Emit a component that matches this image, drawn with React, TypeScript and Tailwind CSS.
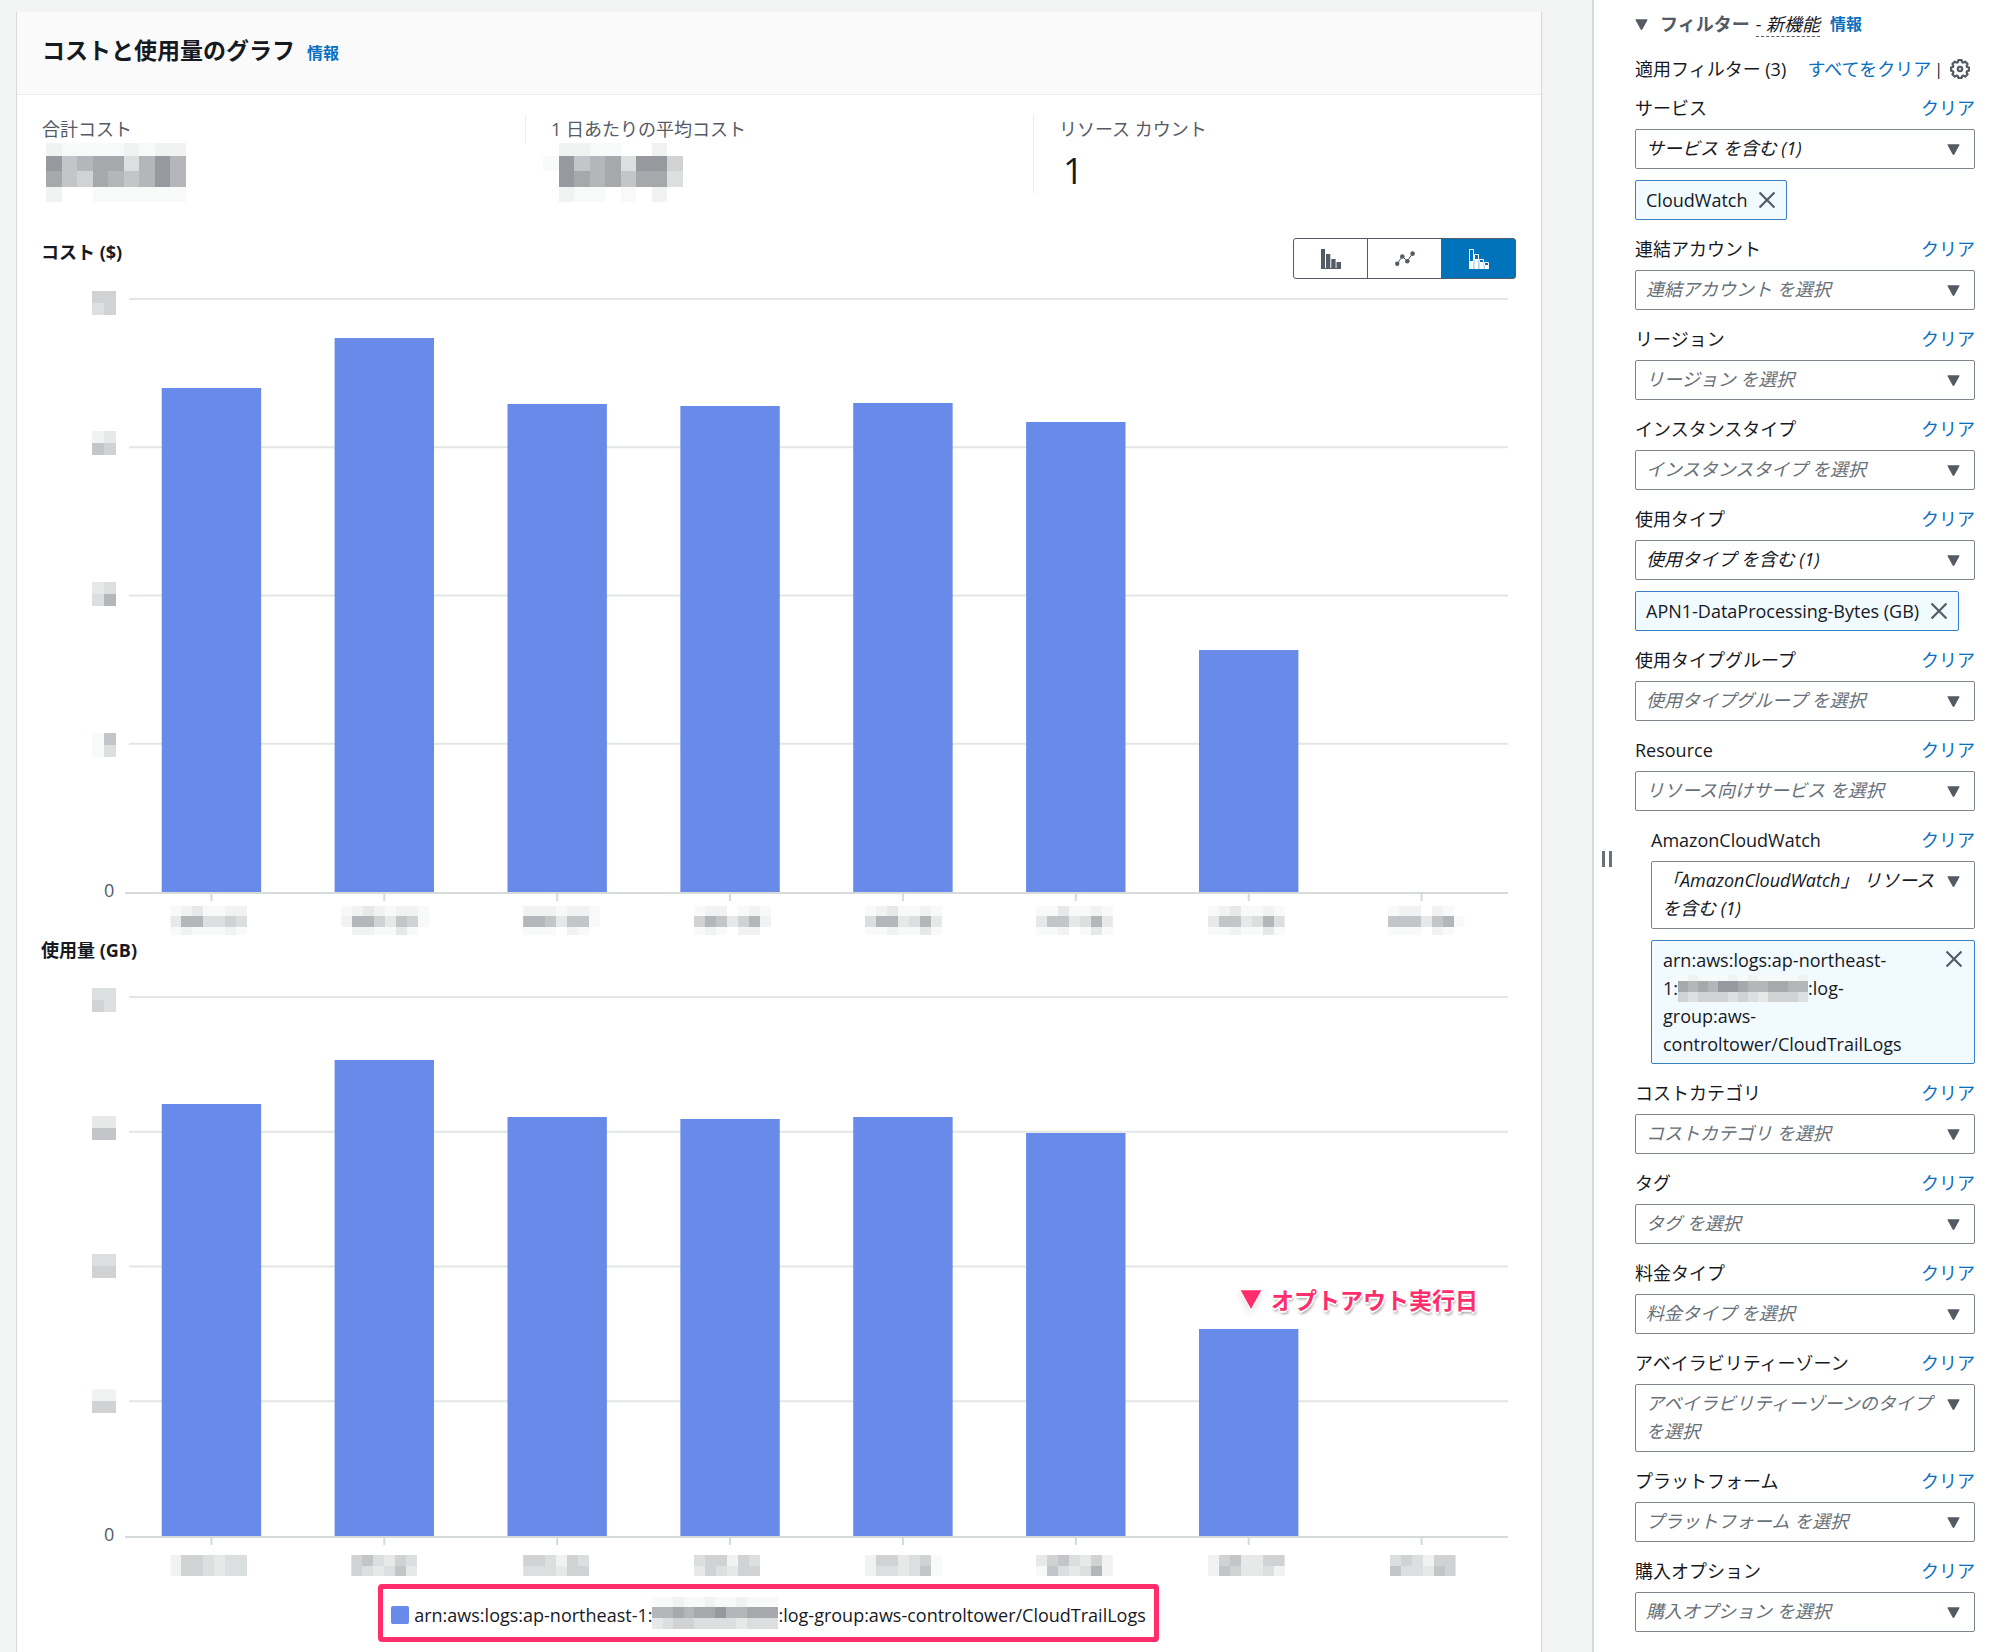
import { useId, useState } from "react"
import clsx from "clsx"

type FilterItem = {
  label: string
  text: string
  token?: string
  selected?: boolean
  tall?: boolean
  nested?: boolean
}

const filters: FilterItem[] = [
  { label: "サービス", text: "サービス を含む (1)", selected: true, token: "CloudWatch" },
  { label: "連結アカウント", text: "連結アカウント を選択" },
  { label: "リージョン", text: "リージョン を選択" },
  { label: "インスタンスタイプ", text: "インスタンスタイプ を選択" },
  { label: "使用タイプ", text: "使用タイプ を含む (1)", selected: true, token: "APN1-DataProcessing-Bytes (GB)" },
  { label: "使用タイプグループ", text: "使用タイプグループ を選択" },
  { label: "Resource", text: "リソース向けサービス を選択" },
  { label: "AmazonCloudWatch", text: "「AmazonCloudWatch」 リソース を含む (1)", selected: true, tall: true, nested: true },
  { label: "コストカテゴリ", text: "コストカテゴリ を選択" },
  { label: "タグ", text: "タグ を選択" },
  { label: "料金タイプ", text: "料金タイプ を選択" },
  { label: "アベイラビリティーゾーン", text: "アベイラビリティーゾーンのタイプ を選択", tall: true },
  { label: "プラットフォーム", text: "プラットフォーム を選択" },
  { label: "購入オプション", text: "購入オプション を選択" },
]

// Shades used by the redaction blocks, from blank to dark
const shades = ["none", "#f8f9f9", "#f1f2f2", "#e7e9e9", "#dcdfdf", "#d0d2d4", "#c4c5c9", "#b5b6ba", "#a7a8ac", "#98999e"]

type MosaicProps = {
  rows: string[]
  heights: number[]
  cell: number
  x?: number
  y?: number
  className?: string
}

function Mosaic({ rows, heights, cell, x, y, className }: MosaicProps) {
  const tops = heights.map((_, i) => heights.slice(0, i).reduce((a, b) => a + b, 0))
  return (
    <svg
      x={x}
      y={y}
      width={cell * Math.max(...rows.map((r) => r.length))}
      height={heights.reduce((a, b) => a + b, 0)}
      className={className}
      shapeRendering="crispEdges"
      aria-hidden="true"
    >
      {rows.map((row, r) =>
        row.split("").map((c, i) => (
          <rect key={`${r}-${i}`} x={i * cell} y={tops[r]} width={cell} height={heights[r]} fill={shades[Number(c)]} />
        ))
      )}
    </svg>
  )
}

type XLabel = { offset: number; rows: string[] }

type ChartProps = {
  title: string
  height: number
  labelsHeight: number
  values: number[]
  yLabels: { y: number; rows: string[] }[]
  xLabels: XLabel[]
  xLabelTop: number
  xHeights: number[]
}

function Chart({ title, height, labelsHeight, values, yLabels, xLabels, xLabelTop, xHeights }: ChartProps) {
  const slot = 100 / values.length
  return (
    <div className="flex pr-2" role="img" aria-label={title}>
      <svg className="w-[84px] shrink-0 overflow-visible" height={height + labelsHeight}>
        {yLabels.map((l) => (
          <Mosaic key={l.y} rows={l.rows} heights={[12, 12]} cell={12} x={51} y={l.y} />
        ))}
        <text x="63" y={height + 5} fontSize="18" fill="#545b64">
          0
        </text>
      </svg>
      <svg className="min-w-0 flex-1 overflow-visible" height={height + labelsHeight}>
        {[0, 1, 2, 3].map((i) => (
          <line key={i} x1="4" x2="100%" y1={(height / 4) * i} y2={(height / 4) * i} stroke="#e3e6e6" strokeWidth="2" />
        ))}
        <line x1="0" x2="100%" y1={height + 1} y2={height + 1} stroke="#d5dbdb" strokeWidth="2" />
        {values.map((v, i) => (
          <rect
            key={i}
            x={`${slot * i + slot * 0.2125}%`}
            y={height - v}
            width={`${slot * 0.575}%`}
            height={v}
            fill="#688ae8"
          />
        ))}
        {xLabels.map((l, i) => (
          <svg key={i} x={`${slot * (i + 0.5)}%`} className="overflow-visible">
            <line x1="0" x2="0" y1={height + 2} y2={height + 9} stroke="#d5dbdb" strokeWidth="2" />
            <Mosaic rows={l.rows} heights={xHeights} cell={11} x={l.offset} y={height + xLabelTop} />
          </svg>
        ))}
      </svg>
    </div>
  )
}

const costYLabels = [
  { y: -8, rows: ["55", "45"] },
  { y: 132, rows: ["23", "65"] },
  { y: 283, rows: ["34", "47"] },
  { y: 434, rows: ["16", "14"] },
]

const usageYLabels = [
  { y: -9, rows: ["44", "54"] },
  { y: 119, rows: ["33", "66"] },
  { y: 257, rows: ["44", "55"] },
  { y: 392, rows: ["22", "55"] },
]

const costXLabels: XLabel[] = [
  { offset: -41, rows: ["1231122", "3774454", "1211121"] },
  { offset: -43, rows: ["12321221", "27753651", "02211310"] },
  { offset: -34, rows: ["2221221", "7763661", "1110210"] },
  { offset: -36, rows: ["1220121", "5763572", "1210220"] },
  { offset: -38, rows: ["1231121", "4773473", "1121131"] },
  { offset: -40, rows: ["1131121", "3663473", "1120131"] },
  { offset: -41, rows: ["1231121", "3663474", "1121131"] },
  { offset: -34, rows: ["1220210", "6663671", "1110210"] },
]

const usageXLabels: XLabel[] = [
  { offset: -41, rows: ["2554344", "2554344"] },
  { offset: -33, rows: ["564354", "543463"] },
  { offset: -34, rows: ["554254", "444355"] },
  { offset: -36, rows: ["455254", "354355"] },
  { offset: -38, rows: ["2553451", "2443461"] },
  { offset: -40, rows: ["3564352", "1643472"] },
  { offset: -41, rows: ["2563355", "2653342"] },
  { offset: -32, rows: ["454255", "644365"] },
]

function Caret({ className }: { className?: string }) {
  return (
    <svg viewBox="0 0 13 11" className={clsx("h-[11px] w-[13px]", className)} fill="#545b64" aria-hidden="true">
      <path d="M1.2 .2H11.8a.7.7 0 0 1 .6 1.1L7.300 10.400a.9.9 0 0 1-1.600 0L.6 1.300A.7.7 0 0 1 1.2 .2Z" />
    </svg>
  )
}

function CloseIcon() {
  return (
    <svg viewBox="0 0 16 16" className="size-4" stroke="#545b64" strokeWidth="2.200" aria-hidden="true">
      <path d="M.5 .5 15.500 15.500M15.500 .5 .5 15.500" />
    </svg>
  )
}

function GearIcon() {
  return (
    <svg viewBox="0 0 20 20" className="size-5" fill="none" stroke="#545b64" strokeWidth="2.200" aria-hidden="true">
      <path
        strokeLinejoin="round"
        d="M8.3 1.2h3.4l.5 1.9 1.3.5 1.7-1 2.4 2.4-1 1.7.5 1.3 1.8.4v3.3l-1.8.5-.5 1.3 1 1.7-2.4 2.4-1.7-1-1.3.5-.5 1.8H8.3l-.5-1.8-1.3-.5-1.7 1-2.4-2.4 1-1.7-.5-1.3-1.8-.5V8.4l1.8-.4.5-1.3-1-1.7 2.4-2.4 1.7 1 1.3-.5Z"
      />
      <circle cx="10" cy="10" r="2.2" />
    </svg>
  )
}

const chartTypes = [
  {
    name: "棒グラフ",
    icon: (
      <svg viewBox="0 0 20 20" className="size-5" fill="currentColor">
        <path d="M0 0h4v20H0zM5 5h4.300v15H5zM10.300 10h4.300v10h-4.300zM15.500 13H20v7h-4.500z" />
        <path d="M0 19h20v1H0z" />
      </svg>
    ),
  },
  {
    name: "折れ線グラフ",
    icon: (
      <svg viewBox="0 0 20 20" className="size-5" fill="currentColor">
        <path d="M2 15 7.300 7.500 12.300 12 17.600 4.500" fill="none" stroke="currentColor" strokeWidth="1" />
        <circle cx="2.200" cy="14.800" r="2.200" />
        <circle cx="7.300" cy="7.500" r="2.300" />
        <circle cx="12.300" cy="12.200" r="2.300" />
        <circle cx="17.600" cy="4.600" r="2.300" />
      </svg>
    ),
  },
  {
    name: "積み上げ",
    icon: (
      <svg viewBox="0 0 20 20" className="size-5" fill="currentColor">
        <path
          d="M.5 .5h4v12h-4zM5.500 5.500h4v5h-4zM10.500 10.500h4v3h-4zM15.500 13.500h4v3h-4z"
          fill="none"
          stroke="currentColor"
          strokeWidth="1"
        />
        <path d="M0 12h4.700v8H0zM5.200 10h4.500v10H5.200zM10.200 13.500h4.600v6.500h-4.600zM15.300 16.500H20V20h-4.700z" />
      </svg>
    ),
  },
]

function ChartTypeToggle() {
  const [active, setActive] = useState(2)
  return (
    <div className="flex" role="group" aria-label="グラフの種類">
      {chartTypes.map((t, i) => (
        <button
          key={t.name}
          type="button"
          aria-label={t.name}
          aria-pressed={active === i}
          onClick={() => setActive(i)}
          className={clsx(
            "-ml-px flex h-[41px] w-[75px] items-center justify-center border border-[#545b64] first:ml-0 first:rounded-l-[3px] last:rounded-r-[3px]",
            active === i ? "bg-[#0073bb] text-white" : "bg-white text-[#545b64]"
          )}
        >
          {t.icon}
        </button>
      ))}
    </div>
  )
}

function Filter({ item }: { item: FilterItem }) {
  const id = useId()
  return (
    <div className={clsx("mt-[15px] first:mt-[11px]", item.nested && "ml-4")}>
      <div className="mb-[7px] flex items-center justify-between">
        <label htmlFor={id}>{item.label}</label>
        <button type="button" className="text-[#0b6fc0]">
          クリア
        </button>
      </div>
      <div className="relative">
        <select
          id={id}
          className={clsx(
            "block w-full appearance-none rounded-[2px] border border-[#7d868c] bg-white pr-9 pb-[2px] pl-[10px] leading-7 whitespace-normal italic",
            item.tall ? "h-[68px]" : "h-10",
            item.selected ? "text-[#16191f]" : "text-[#687078]"
          )}
        >
          <option>{item.text}</option>
        </select>
        <Caret className="pointer-events-none absolute top-[15px] right-[15px]" />
      </div>
      {item.token && (
        <div className="mt-[11px] flex h-10 w-fit items-center gap-3 rounded-[2px] border border-[#3a80c9] bg-[#f1faff] pr-[11px] pl-[10px]">
          <span>{item.token}</span>
          <button type="button" aria-label={`${item.token} を削除`}>
            <CloseIcon />
          </button>
        </div>
      )}
      {item.nested && (
        <div className="mt-[11px] flex items-start justify-between rounded-[2px] border border-[#3a80c9] bg-[#f1faff] py-[5px] pr-3 pl-[11px]">
          <div>
            <div>arn:aws:logs:ap-northeast-</div>
            <div className="flex items-center">
              1:
              <Mosaic rows={["1211121211112", "8787998778877", "5455545435554"]} heights={[6, 11, 10]} cell={10} />
              :log-
            </div>
            <div>group:aws-</div>
            <div>controltower/CloudTrailLogs</div>
          </div>
          <button type="button" aria-label="リソースを削除" className="mt-[5px]">
            <CloseIcon />
          </button>
        </div>
      )}
    </div>
  )
}

function CostPanel() {
  return (
    <section className="min-w-0 flex-1 border-x border-[#d5dbdb] bg-white">
      <header className="flex h-[83px] items-center gap-3 border-b border-[#eaeded] bg-[#fafafa] px-[25px] pb-[6px]">
        <h2 className="text-[23px] font-bold">コストと使用量のグラフ</h2>
        <a href="#info" className="pt-[6px] text-base font-bold text-[#0b6fc0]">
          情報
        </a>
      </header>

      {/* Summary */}
      <div className="mt-5 grid grid-cols-3">
        <div className="pl-[25px]">
          <p className="text-[#545b64]">合計コスト</p>
          <Mosaic
            rows={["211112122", "967884797", "865876797", "200111111"]}
            heights={[13, 15, 16, 15]}
            cell={15.5}
            className="ml-1"
          />
        </div>
        <div className="flex">
          <span className="h-7 w-px bg-[#eaeded]" />
          <div className="pl-[25px]">
            <p className="text-[#545b64]">1 日あたりの平均コスト</p>
            <Mosaic
              rows={["022110020", "196784995", "098786884", "021101020"]}
              heights={[13, 15, 16, 15]}
              cell={15.5}
              className="-ml-2"
            />
          </div>
        </div>
        <div className="flex">
          <span className="h-[78px] w-px bg-[#eaeded]" />
          <div className="pl-[25px]">
            <p className="text-[#545b64]">リソース カウント</p>
            <p className="pl-1 text-4xl leading-[56px]">1</p>
          </div>
        </div>
      </div>

      <div className="pt-9 pr-[25px] pl-6">
        <div className="mb-5 flex items-start justify-between">
          <h3 className="font-bold">コスト ($)</h3>
          <ChartTypeToggle />
        </div>
        <Chart
          title="コスト ($)"
          height={593}
          labelsHeight={44}
          values={[504, 554, 488, 486, 489, 470, 242, 0]}
          yLabels={costYLabels}
          xLabels={costXLabels}
          xLabelTop={14}
          xHeights={[10, 11, 8]}
        />

        <h3 className="mb-[33px] font-bold">使用量 (GB)</h3>
        <div className="relative">
          <Chart
            title="使用量 (GB)"
            height={539}
            labelsHeight={48}
            values={[432, 476, 419, 417, 419, 403, 207, 0]}
            yLabels={usageYLabels}
            xLabels={usageXLabels}
            xLabelTop={19}
            xHeights={[11, 10]}
          />
          <p className="absolute top-[289px] right-[38px] flex items-center gap-2 text-[23px] font-bold text-[#ff2d6b] [text-shadow:2px_0_0_white,-2px_0_0_white,0_-2px_0_white,0_2px_0_white,1px_3px_3px_rgba(0,0,0,.45)]">
            <svg viewBox="0 0 24 22" className="h-[22px] w-6 drop-shadow-md" aria-hidden="true">
              <path d="M.7 .7h22.600L12 21.300Z" fill="#ff2d6b" stroke="white" strokeWidth="1.200" />
            </svg>
            オプトアウト実行日
          </p>
        </div>

        {/* Legend */}
        <div className="flex justify-center pr-5 pb-2">
          <div className="flex h-[58px] items-center rounded-[4px] border-[5px] border-[#ff2d6b] px-2 pt-1">
            <span className="mr-[5px] size-[18px] rounded-[2px] bg-[#688ae8]" />
            arn:aws:logs:ap-northeast-1:
            <Mosaic
              rows={["112112112111", "778788977888", "345544443444"]}
              heights={[10, 11, 11]}
              cell={10.5}
              className="-mt-1"
            />
            :log-group:aws-controltower/CloudTrailLogs
          </div>
        </div>
      </div>
    </section>
  )
}

function FilterSidebar() {
  return (
    <aside className="flex w-[408px] shrink-0 border-l-2 border-[#d5dbdb] bg-white">
      <div className="w-[41px] shrink-0">
        <button type="button" aria-label="サイズ変更" className="mt-[851px] ml-2 flex gap-1">
          <span className="h-4 w-[3px] bg-[#687078]" />
          <span className="h-4 w-[3px] bg-[#687078]" />
        </button>
      </div>
      <div className="min-w-0 flex-1 pt-[10px] pr-[25px]">
        <div className="flex items-center">
          <button type="button" className="flex items-center gap-3 font-bold text-[#545b64]">
            <Caret />
            フィルター
          </button>
          <span className="ml-[6px] border-b border-dashed border-[#545b64] leading-6 italic">- 新機能</span>
          <a href="#info" className="ml-[10px] text-base font-bold text-[#0b6fc0]">
            情報
          </a>
        </div>
        <div className="mt-[17px] flex items-center">
          <span>適用フィルター (3)</span>
          <button type="button" className="ml-auto text-[#0b6fc0]">
            すべてをクリア
          </button>
          <span className="mx-[3px] text-base">|</span>
          <button type="button" aria-label="設定" className="mr-[5px] ml-1">
            <GearIcon />
          </button>
        </div>
        <div>
          {filters.map((item) => (
            <Filter key={item.label} item={item} />
          ))}
        </div>
      </div>
    </aside>
  )
}

export default function App() {
  return (
    <div className="flex min-h-screen bg-[#f2f3f3] font-['Open_Sans','Noto_Sans_CJK_JP',sans-serif] text-[18px] leading-7 text-[#16191f]">
      <main className="flex min-w-0 flex-1 pt-3 pr-[50px] pl-4">
        <CostPanel />
      </main>
      <FilterSidebar />
    </div>
  )
}
